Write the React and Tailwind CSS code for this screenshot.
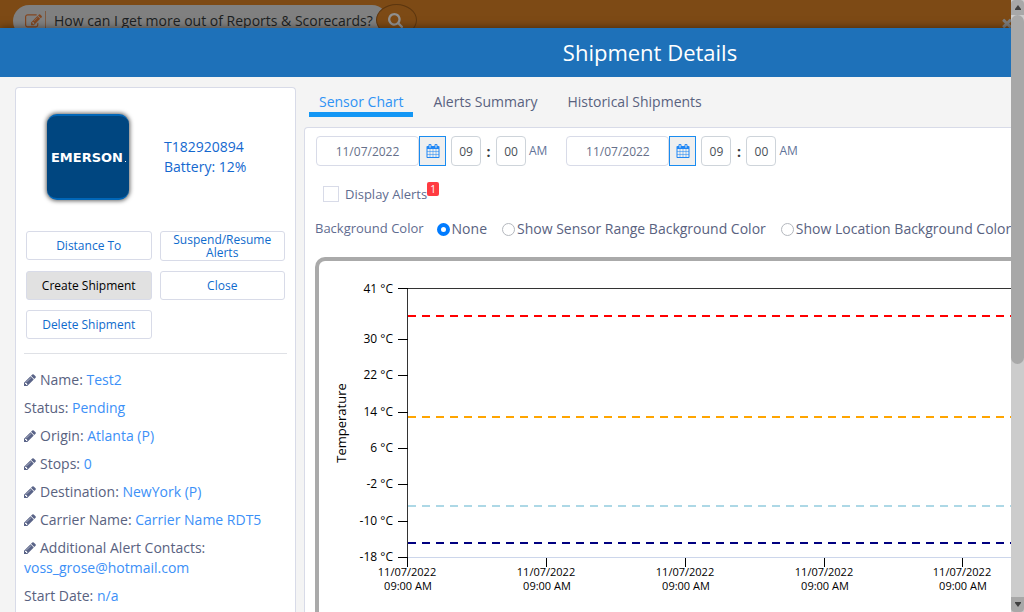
import React from "react";

function Glyph({ d, className, box = "0 0 1792 1792" }) {
  return (
    <svg viewBox={box} fill="currentColor" aria-hidden="true" className={className}>
      <path d={d} />
    </svg>
  );
}

const PENCIL =
  "M491 1536l91-91-235-235-91 91v107h128v128h107zm523-928q0-22-22-22-10 0-17 7l-542 542q-7 7-7 17 0 22 22 22 10 0 17-7l542-542q7-7 7-17zm-54-192l416 416-832 832h-416v-416zm683 96q0 53-37 90l-166 166-416-416 166-165q36-38 90-38 53 0 91 38l235 234q37 39 37 91z";
const CALENDAR =
  "M192 1664h288v-288h-288v288zm352 0h320v-288h-320v288zm-352-352h288v-320h-288v320zm352 0h320v-320h-320v320zm-352-384h288v-288h-288v288zm736 736h320v-288h-320v288zm-384-736h320v-288h-320v288zm768 736h288v-288h-288v288zm-384-352h320v-320h-320v320zm-352-864v-288q0-13-9.500-22.500t-22.500-9.500h-64q-13 0-22.500 9.500t-9.500 22.500v288q0 13 9.500 22.500t22.500 9.500h64q13 0 22.500-9.500t9.500-22.500zm736 864h288v-320h-288v320zm-384-384h320v-288h-320v288zm384 0h288v-288h-288v288zm32-480v-288q0-13-9.500-22.500t-22.500-9.500h-64q-13 0-22.500 9.500t-9.500 22.500v288q0 13 9.500 22.500t22.500 9.500h64q13 0 22.500-9.500t9.500-22.500zm384-64v1280q0 52-38 90t-90 38h-1408q-52 0-90-38t-38-90v-1280q0-52 38-90t90-38h128v-96q0-66 47-113t113-47h64q66 0 113 47t47 113v96h384v-96q0-66 47-113t113-47h64q66 0 113 47t47 113v96h128q52 0 90 38t38 90z";
const EDIT =
  "M888 1184l116-116-152-152-116 116v56h96v96h56zm440-720q-16-16-33 1l-350 350q-17 17-1 33t33-1l350-350q17-17 1-33zm80 594v190q0 119-84.500 203.500t-203.500 84.500h-832q-119 0-203.500-84.500t-84.500-203.500v-832q0-119 84.500-203.500t203.500-84.500h832q63 0 117 25 15 7 18 23 3 17-9 29l-49 49q-14 14-32 8-23-6-45-6h-832q-66 0-113 47t-47 113v832q0 66 47 113t113 47h832q66 0 113-47t47-113v-126q0-13 9-22l64-64q15-15 35-7t20 29zm-96-738l288 288-672 672h-288v-288zm444 132l-92 92-288-288 92-92q28-28 68-28t68 28l152 152q28 28 28 68t-28 68z";
const SEARCH =
  "M1216 832q0-185-131.500-316.500t-316.500-131.500-316.500 131.500-131.500 316.500 131.500 316.500 316.500 131.500 316.500-131.500 131.500-316.500zm512 832q0 52-38 90t-90 38q-54 0-90-38l-343-342q-179 124-399 124-143 0-273.500-55.500t-225-150-150-225-55.500-273.500 55.500-273.500 150-225 225-150 273.500-55.500 273.500 55.500 225 150 150 225 55.500 273.500q0 220-124 399l343 343q37 37 37 90z";
const TIMES =
  "M1490 1322q0 40-28 68l-136 136q-28 28-68 28t-68-28l-294-294-294 294q-28 28-68 28t-68-28l-136-136q-28-28-28-68t28-68l294-294-294-294q-28-28-28-68t28-68l136-136q28-28 68-28t68 28l294 294 294-294q28-28 68-28t68 28l136 136q28 28 28 68t-28 68l-294 294 294 294q28 28 28 68z";

function TopBar() {
  return (
    <header className="flex h-7 shrink-0 items-start justify-between overflow-hidden bg-[#7d4a15] pl-[13px]">
      <div className="flex items-start">
        <label className="mt-[5px] flex h-8 w-[375px] items-center rounded-full bg-[#808080] pl-3">
          <Glyph d={EDIT} className="size-[17px] shrink-0 text-[#83461f]" />
          <span className="ml-[3px] h-5 w-px shrink-0 bg-[#7f5a40]" />
          <input
            aria-label="Ask a question"
            defaultValue="How can I get more out of Reports & Scorecards?"
            className="ml-2 w-[325px] bg-transparent text-[14px] leading-5 text-[#1c1f22] outline-none"
          />
        </label>
        <button
          type="button"
          aria-label="Search"
          className="-ml-3 mt-1 flex h-8 w-[41px] items-center justify-center rounded-[50%] border border-[#5c360f] bg-[#7d4a15] pr-[3px] text-[#909090]"
        >
          <Glyph d={SEARCH} box="64 128 1664 1664" className="size-[15px]" />
        </button>
      </div>
      <button type="button" aria-label="Close" className="mt-4 h-[14px] w-[11px] overflow-hidden text-[#7c7c7c]">
        <Glyph d={TIMES} className="size-[14px]" />
      </button>
    </header>
  );
}

const ACTION =
  "flex min-h-[29px] items-center justify-center rounded-[3px] border border-[#d8dbe8] px-2 text-center text-[12px] leading-[13px]";

function Field({ label, value, editable }) {
  return (
    <div>
      {editable && (
        <button type="button" aria-label={`Edit ${label}`} className="mr-1 inline-block align-[-1px]">
          <Glyph d={PENCIL} box="128 128 1536 1536" className="size-3 text-[#5a6488]" />
        </button>
      )}
      <span>{label}: </span>
      <a href="#field" className="text-[#3c90f7]">{value}</a>
    </div>
  );
}

function ShipmentCard() {
  return (
    <aside className="w-[281px] shrink-0 rounded-t-[4px] border border-b-0 border-[#d8dbe8] bg-white px-2 pt-[26px]">
      <div className="flex items-center pl-[23px]">
        <div className="flex h-[86px] w-[82px] items-center justify-center rounded-[10px] border-y-2 border-[#0066b8] bg-[#004680] text-white shadow-[0_0_4px_1px_rgba(0,0,0,0.6)]">
          <svg viewBox="0 0 80 20" className="h-5 w-20" role="img" aria-label="Emerson">
            <text x="39" y="15" textAnchor="middle" fill="white" fontFamily="DejaVu Sans, sans-serif" fontSize="13" fontWeight="700">
              EMERSON
            </text>
            <rect x="77" y="14" width="1" height="1" fill="white" />
          </svg>
        </div>
        <div className="ml-[35px] text-[14px] leading-5 text-[#1468cf]">
          <p>T182920894</p>
          <p>Battery: 12%</p>
        </div>
      </div>
      <div className="mx-[2px] mt-[31px] grid grid-cols-2 items-start gap-x-2 gap-y-[10px] text-[#0f6bcd]">
        <button type="button" className={ACTION}>Distance To</button>
        <button type="button" className={`${ACTION} py-px`}>Suspend/Resume Alerts</button>
        <button type="button" className={`${ACTION} bg-[#e1e1e1] text-black`}>Create Shipment</button>
        <button type="button" className={ACTION}>Close</button>
        <button type="button" className={ACTION}>Delete Shipment</button>
      </div>
      <hr className="mt-[14px] border-[#dfe1e6]" />
      <div className="mt-4 space-y-2 pb-4 text-[14px] leading-5 text-[#59627f]">
        <Field editable label="Name" value="Test2" />
        <Field label="Status" value="Pending" />
        <Field editable label="Origin" value="Atlanta (P)" />
        <Field editable label="Stops" value="0" />
        <Field editable label="Destination" value="NewYork (P)" />
        <Field editable label="Carrier Name" value="Carrier Name RDT5" />
        <Field editable label="Additional Alert Contacts" value="voss_grose@hotmail.com" />
        <Field label="Start Date" value="n/a" />
      </div>
    </aside>
  );
}

const TIME =
  "h-[30px] w-[30px] rounded-[4px] border border-[#ced4da] bg-white text-center text-[12px] text-[#495057] outline-none";

function DateTime({ name }) {
  return (
    <div className="flex items-center">
      <input
        aria-label={`${name} date`}
        defaultValue="11/07/2022"
        className="h-[30px] w-[103px] rounded-[4px] border border-[#d8dbe8] bg-white text-center text-[12px] text-[#66708a] outline-none"
      />
      <button
        type="button"
        aria-label={`Pick ${name} date`}
        className="flex h-[30px] w-[27px] items-center justify-center border border-[#1a8cf0] bg-[#efefef] text-[#1f86f5]"
      >
        <Glyph d={CALENDAR} className="size-[14px]" />
      </button>
      <input aria-label={`${name} hour`} defaultValue="09" className={`${TIME} ml-[5px]`} />
      <span className="w-[15px] text-center text-[14px] font-bold text-[#343a40]">:</span>
      <input aria-label={`${name} minute`} defaultValue="00" className={TIME} />
      <span className="ml-[3px] text-[12px] text-[#5f7399]">AM</span>
    </div>
  );
}

function Option({ label, checked }) {
  return (
    <label className="flex items-center gap-[2px] whitespace-nowrap text-[14px] leading-5 text-[#59627f]">
      <input
        type="radio"
        name="background"
        defaultChecked={checked}
        className="size-[13px] appearance-none rounded-full border border-[#b4b8be] bg-white checked:border-4 checked:border-[#007bff]"
      />
      {label}
    </label>
  );
}

const Y_TICKS = [
  ["41 °C", 28],
  ["30 °C", 78],
  ["22 °C", 114],
  ["14 °C", 151],
  ["6 °C", 187],
  ["-2 °C", 223],
  ["-10 °C", 260],
  ["-18 °C", 296],
];
const X_TICKS = [88, 227, 366, 505, 643];
const LIMITS = [
  ["red", 55],
  ["orange", 156],
  ["lightblue", 245],
  ["navy", 282],
];

function Chart() {
  return (
    <div className="mt-[18px] rounded-tl-[10px] rounded-tr-[10px] border-4 border-b-0 border-[#aaaaaa]">
      <svg
        viewBox="0 0 972 380"
        width="972"
        height="380"
        role="img"
        aria-label="Temperature chart"
        fontFamily="Open Sans, sans-serif"
        fontSize="12"
        className="block"
      >
        <path d="M89 296.500H960" stroke="#ccd6eb" />
        <path d="M88 27.500H960M88.500 28V297" stroke="#333" fill="none" />
        {LIMITS.map(([color, y]) => (
          <path key={color} d={`M89 ${y}H960`} stroke={color} strokeWidth="2" strokeDasharray="8 6" />
        ))}
        {Y_TICKS.map(([label, y]) => (
          <g key={label}>
            <path d={`M79 ${y === 28 ? 27.5 : y === 296 ? 296.5 : y + 0.5}H89`} stroke="#000" />
            <text x="74" y={y + 4} textAnchor="end">{label}</text>
          </g>
        ))}
        {X_TICKS.map((x) => (
          <g key={x}>
            <path d={`M${x + 0.5} 297V306`} stroke="#000" />
            <text x={x} y="315" fontSize="11" textAnchor="middle">11/07/2022</text>
            <text x={x + 1} y="329" fontSize="11" textAnchor="middle">09:00 AM</text>
          </g>
        ))}
        <text transform="translate(27 162) rotate(-90)" fontSize="13" textAnchor="middle">Temperature</text>
      </svg>
    </div>
  );
}

const TAB = "border-b-[5px] px-[10px] pb-[1px] leading-[19px]";

function Main() {
  return (
    <main className="min-w-0 flex-1">
      <nav className="flex gap-[10px] pl-[5px] pt-[5px] text-[14px]">
        <a href="#chart" className={`${TAB} border-[#1397f5] text-[#2f93f5]`}>Sensor Chart</a>
        <a href="#alerts" className={`${TAB} border-transparent`}>Alerts Summary</a>
        <a href="#history" className={`${TAB} border-transparent`}>Historical Shipments</a>
      </nav>
      <section className="mt-[10px] rounded-t-[4px] border border-b-0 border-[#d8dbe8] bg-white px-[10px] pt-2">
        <div className="flex gap-[19px] pl-px">
          <DateTime name="Start" />
          <DateTime name="End" />
        </div>
        <div className="mt-4 flex items-center pl-2 text-[13px] leading-5 text-[#5f6c90]">
          <label className="flex items-center gap-[6px]">
            <input type="checkbox" className="size-4 appearance-none border border-[#d8dbe8] bg-white checked:bg-[#007bff]" />
            Display Alerts
          </label>
          <span className="mb-[10px] rounded-[2px] bg-[#ff3b41] px-[3px] text-[10px] leading-[14px] text-white">1</span>
        </div>
        <fieldset className="mt-[13px] flex items-center">
          <span className="mr-[13px] whitespace-nowrap text-[13px] text-[#5f6c90]">Background Color</span>
          <span className="flex gap-[15px]">
            <Option label="None" checked />
            <Option label="Show Sensor Range Background Color" />
            <Option label="Show Location Background Color" />
          </span>
        </fieldset>
        <Chart />
      </section>
    </main>
  );
}

function ScrollRail() {
  return (
    <div aria-hidden="true" className="flex w-[13px] shrink-0 flex-col bg-[#cccccc]">
      <div className="flex h-[15px] items-center justify-center rounded-t-[4px] bg-[#a8a8a8]">
        <svg viewBox="0 0 6 5" className="h-[5px] w-[6px]"><path d="M3 0L6 4V5H0V4Z" fill="#404040" /></svg>
      </div>
      <div className="h-[57%] rounded-full bg-[#a8a8a8]" />
      <div className="mt-auto flex h-[15px] items-center justify-center rounded-b-[4px] bg-[#a8a8a8]">
        <svg viewBox="0 0 6 5" className="h-[5px] w-[6px]"><path d="M3 5L0 1V0H6V1Z" fill="#404040" /></svg>
      </div>
    </div>
  );
}

export default function App() {
  return (
    <div className="flex h-screen overflow-hidden bg-[#7a7a7a] font-['Open_Sans',sans-serif] text-[#59627f]">
      <div className="flex min-w-0 flex-1 flex-col overflow-hidden">
        <TopBar />
        <div className="flex min-w-[1300px] flex-1 flex-col bg-[#f4f4f4] shadow-[0_0_8px_rgba(0,0,0,0.5)]">
          <h1 className="bg-[#1e71b9] py-[9px] text-center text-[22px] leading-[31px] text-white">Shipment Details</h1>
          <div className="flex flex-1 gap-2 px-[15px] pt-[10px]">
            <ShipmentCard />
            <Main />
          </div>
        </div>
      </div>
      <ScrollRail />
    </div>
  );
}
